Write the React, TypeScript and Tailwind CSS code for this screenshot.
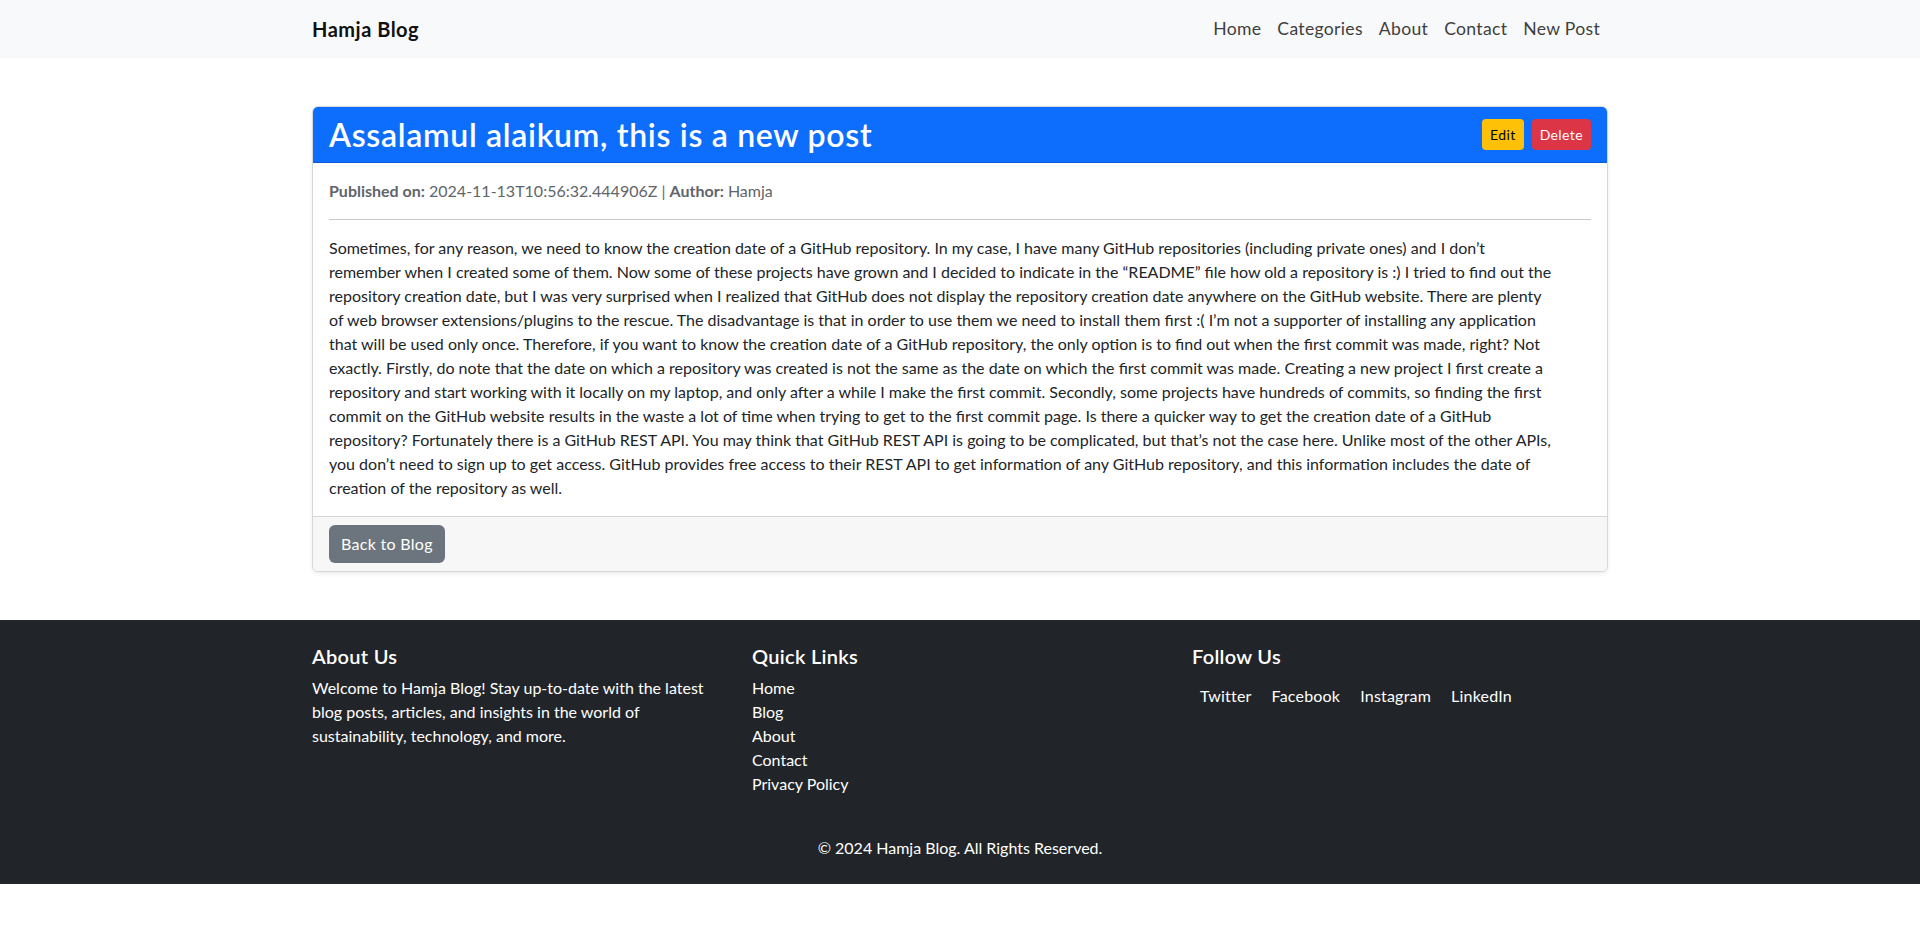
import React from "react";

const lines = [
  "Sometimes, for any reason, we need to know the creation date of a GitHub repository. In my case, I have many GitHub repositories (including private ones) and I don\u2019t",
  "remember when I created some of them. Now some of these projects have grown and I decided to indicate in the \u201cREADME\u201d file how old a repository is :) I tried to find out the",
  "repository creation date, but I was very surprised when I realized that GitHub does not display the repository creation date anywhere on the GitHub website. There are plenty",
  "of web browser extensions/plugins to the rescue. The disadvantage is that in order to use them we need to install them first :( I\u2019m not a supporter of installing any application",
  "that will be used only once. Therefore, if you want to know the creation date of a GitHub repository, the only option is to find out when the first commit was made, right? Not",
  "exactly. Firstly, do note that the date on which a repository was created is not the same as the date on which the first commit was made. Creating a new project I first create a",
  "repository and start working with it locally on my laptop, and only after a while I make the first commit. Secondly, some projects have hundreds of commits, so finding the first",
  "commit on the GitHub website results in the waste a lot of time when trying to get to the first commit page. Is there a quicker way to get the creation date of a GitHub",
  "repository? Fortunately there is a GitHub REST API. You may think that GitHub REST API is going to be complicated, but that\u2019s not the case here. Unlike most of the other APIs,",
  "you don\u2019t need to sign up to get access. GitHub provides free access to their REST API to get information of any GitHub repository, and this information includes the date of",
  "creation of the repository as well.",
];

export default function App() {
  return (
    <div className="min-h-[932px] bg-white text-[#212529] text-[16px] leading-[24px] font-['Lato','Liberation_Sans',sans-serif]">
      {/* Navbar */}
      <nav className="h-[58px] bg-[#f8f9fa]">
        <div className="mx-auto flex h-full w-[1320px] items-center justify-between px-[12px]">
          <a className="text-[20px] font-bold leading-[30px] tracking-[0.5px] text-[#111]">Hamja Blog</a>
          <ul className="flex items-center">
            {["Home", "Categories", "About", "Contact", "New Post"].map((l) => (
              <li key={l}>
                <a className="block px-[8px] py-[8px] text-[17.6px] leading-[26.4px] tracking-[0.3px] text-[#3f3f3f]">{l}</a>
              </li>
            ))}
          </ul>
        </div>
      </nav>

      {/* Main */}
      <main className="mx-auto mt-[48px] mb-[48px] w-[1320px] px-[12px]">
        <div className="overflow-hidden rounded-[6px] border border-[#d6d7d8] bg-white shadow-[0_2px_4px_rgba(0,0,0,0.075)]">
          <div className="flex items-center justify-between border-b border-[#0b5ed7] bg-[#0d6efd] px-[16px] py-[8px] text-white">
            <h2 className="text-[32px] font-semibold leading-[39px] tracking-[0.7px]">Assalamul alaikum, this is a new post</h2>
            <div className="flex items-center gap-[8px]">
              <button className="h-[31px] rounded-[4px] bg-[#ffc107] px-[8px] text-[14px] tracking-[0.4px] text-black">Edit</button>
              <button className="h-[31px] rounded-[4px] bg-[#dc3545] px-[8px] text-[14px] tracking-[0.4px] text-white">Delete</button>
            </div>
          </div>
          <div className="p-[16px]">
            <p className="mb-[16px] text-[#5f656b]">
              <strong className="font-bold">Published on:</strong> 2024-11-13T10:56:32.444906Z | <strong className="font-bold">Author:</strong> Hamja
            </p>
            <hr className="my-[16px] border-t border-[#c8c9ca]" />
            <p>
              {lines.map((l, i) => (
                <span key={i} className="block whitespace-nowrap">{l}</span>
              ))}
            </p>
          </div>
          <div className="border-t border-[#d6d7d8] bg-[#f7f7f7] px-[16px] py-[8px]">
            <button className="h-[38px] rounded-[6px] bg-[#6c757d] px-[12px] tracking-[0.3px] text-white">Back to Blog</button>
          </div>
        </div>
      </main>

      {/* Footer */}
      <footer className="bg-[#212529] py-[24px] text-white">
        <div className="mx-auto w-[1320px] px-[12px]">
          <div className="grid grid-cols-3 gap-x-[24px]">
            <div>
              <h5 className="mb-[8px] text-[20px] font-semibold leading-[24px] tracking-[0.3px]">About Us</h5>
              <p className="mb-[16px]">
                <span className="block">Welcome to Hamja Blog! Stay up-to-date with the latest</span>
                <span className="block">blog posts, articles, and insights in the world of</span>
                <span className="block">sustainability, technology, and more.</span>
              </p>
            </div>
            <div>
              <h5 className="mb-[8px] text-[20px] font-semibold leading-[24px] tracking-[0.3px]">Quick Links</h5>
              <ul className="mb-[16px]">
                {["Home", "Blog", "About", "Contact", "Privacy Policy"].map((l) => (
                  <li key={l}><a className="text-white">{l}</a></li>
                ))}
              </ul>
            </div>
            <div>
              <h5 className="mb-[8px] text-[20px] font-semibold leading-[24px] tracking-[0.3px]">Follow Us</h5>
              <div className="flex">
                {["Twitter", "Facebook", "Instagram", "LinkedIn"].map((l) => (
                  <a key={l} className="mr-[4px] block px-[8px] py-[8px] tracking-[0.2px] text-white">{l}</a>
                ))}
              </div>
            </div>
          </div>
          <p className="mt-[24px] text-center">&copy; 2024 Hamja Blog. All Rights Reserved.</p>
        </div>
      </footer>
    </div>
  );
}
